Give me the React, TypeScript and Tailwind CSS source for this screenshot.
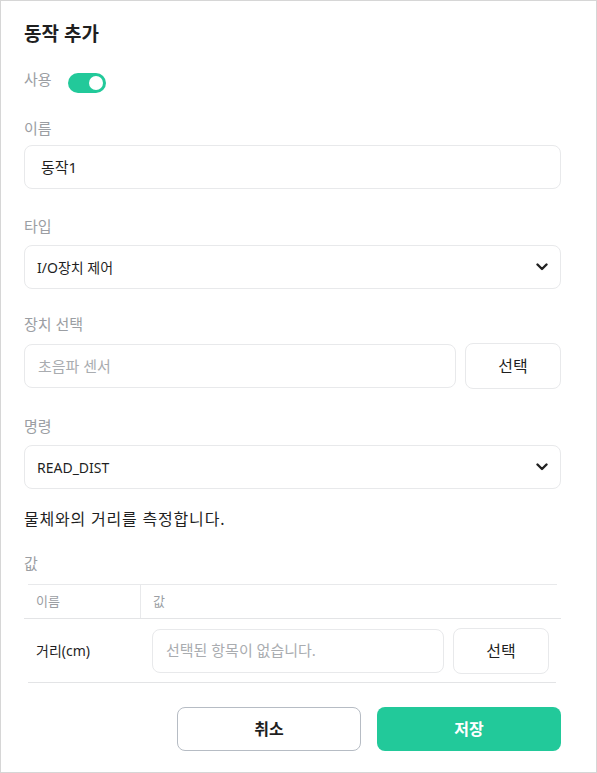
import { useState } from "react";

function Chevron() {
  return (
    <svg width="12" height="8" viewBox="0 0 12 8" fill="none" className="shrink-0">
      <path d="M1.5 1.5L6 6L10.5 1.5" stroke="#222" strokeWidth="2.4" strokeLinecap="round" strokeLinejoin="round" />
    </svg>
  );
}

function Label({ text }: { text: string }) {
  return <div className="text-[15px] leading-5 text-[#9b9ea3]">{text}</div>;
}

function SelectBox({ value }: { value: string }) {
  return (
    <div className="h-[44px] rounded-[8px] border border-[#e8e9eb] flex items-center justify-between pl-[12px] pr-[12px]">
      <span className="text-[14px] text-[#1f1f1f]">{value}</span>
      <Chevron />
    </div>
  );
}

export default function App() {
  const [enabled, setEnabled] = useState(true);

  return (
    <div
      className="w-[597px] h-[773px] bg-white border border-[#d6d6d6] pl-[23px] pr-[35px] pt-[19px] flex flex-col"
      style={{ fontFamily: "'Noto Sans', 'Noto Sans CJK KR', sans-serif" }}
    >
      <h1 className="text-[19px] leading-[28px] font-bold text-[#1f1f1f]">동작 추가</h1>

      <div className="mt-[21px] flex items-start gap-[16px]">
        <span className="text-[15px] leading-5 text-[#9b9ea3]">사용</span>
        <button
          onClick={() => setEnabled(!enabled)}
          className={`mt-1 w-[38px] h-[20px] rounded-full flex items-center px-[3px] ${enabled ? "bg-[#22c99a] justify-end" : "bg-[#d1d5db] justify-start"}`}
        >
          <span className="block w-[14px] h-[14px] rounded-full bg-white" />
        </button>
      </div>

      <div className="mt-[25px]">
        <Label text="이름" />
        <div className="mt-[7px] h-[44px] rounded-[8px] border border-[#e8e9eb] flex items-center pl-4">
          <span className="text-[15px] text-[#1f1f1f]">동작1</span>
        </div>
      </div>

      <div className="mt-[27px]">
        <Label text="타입" />
        <div className="mt-[9px]">
          <SelectBox value="I/O장치 제어" />
        </div>
      </div>

      <div className="mt-[25px]">
        <Label text="장치 선택" />
        <div className="mt-[9px] flex items-center gap-[9px]">
          <div className="flex-1 h-[44px] rounded-[8px] border border-[#e8e9eb] flex items-center pl-[13px]">
            <span className="text-[15px] text-[#a9acb0]">초음파 센서</span>
          </div>
          <button className="w-[96px] h-[46px] rounded-[8px] border border-[#e8e9eb] text-[16px] text-[#1f1f1f]">선택</button>
        </div>
      </div>

      <div className="mt-[27px]">
        <Label text="명령" />
        <div className="mt-[9px]">
          <SelectBox value="READ_DIST" />
        </div>
      </div>

      <p className="mt-[18px] text-[16px] leading-6 tracking-[0.8px] text-[#1f1f1f]">물체와의 거리를 측정합니다.</p>

      <div className="mt-[22px]">
        <Label text="값" />
        <div className="mt-[11px]">
          <div className="mx-1 border-t border-[#e8e9eb]" />
          <div className="flex h-[34px] border-b border-[#e3e4e6] text-[13px] text-[#9b9ea3]">
            <div className="w-[117px] border-r border-[#e8e9eb] flex items-center pl-3">이름</div>
            <div className="flex-1 flex items-center pl-3">값</div>
          </div>
          <div className="flex h-[63px] items-center">
            <div className="w-[117px] pl-3 text-[14px] text-[#1f1f1f]">거리(cm)</div>
            <div className="flex-1 flex items-center gap-[9px] pl-[11px] pr-3">
              <div className="flex-1 h-[44px] rounded-[8px] border border-[#e8e9eb] flex items-center pl-[13px]">
                <span className="text-[15px] text-[#a9acb0]">선택된 항목이 없습니다.</span>
              </div>
              <button className="w-[96px] h-[46px] rounded-[8px] border border-[#e8e9eb] text-[16px] text-[#1f1f1f]">선택</button>
            </div>
          </div>
          <div className="ml-1 mr-[5px] border-t border-[#e3e4e6]" />
        </div>
      </div>

      <div className="mt-[24px] flex justify-end gap-[16px]">
        <button className="w-[184px] h-[44px] rounded-[8px] border border-[#b6bcc4] bg-white text-[16px] font-bold text-[#1f1f1f]">취소</button>
        <button className="w-[184px] h-[44px] rounded-[8px] bg-[#22c99a] text-[16px] font-bold text-white">저장</button>
      </div>
    </div>
  );
}
